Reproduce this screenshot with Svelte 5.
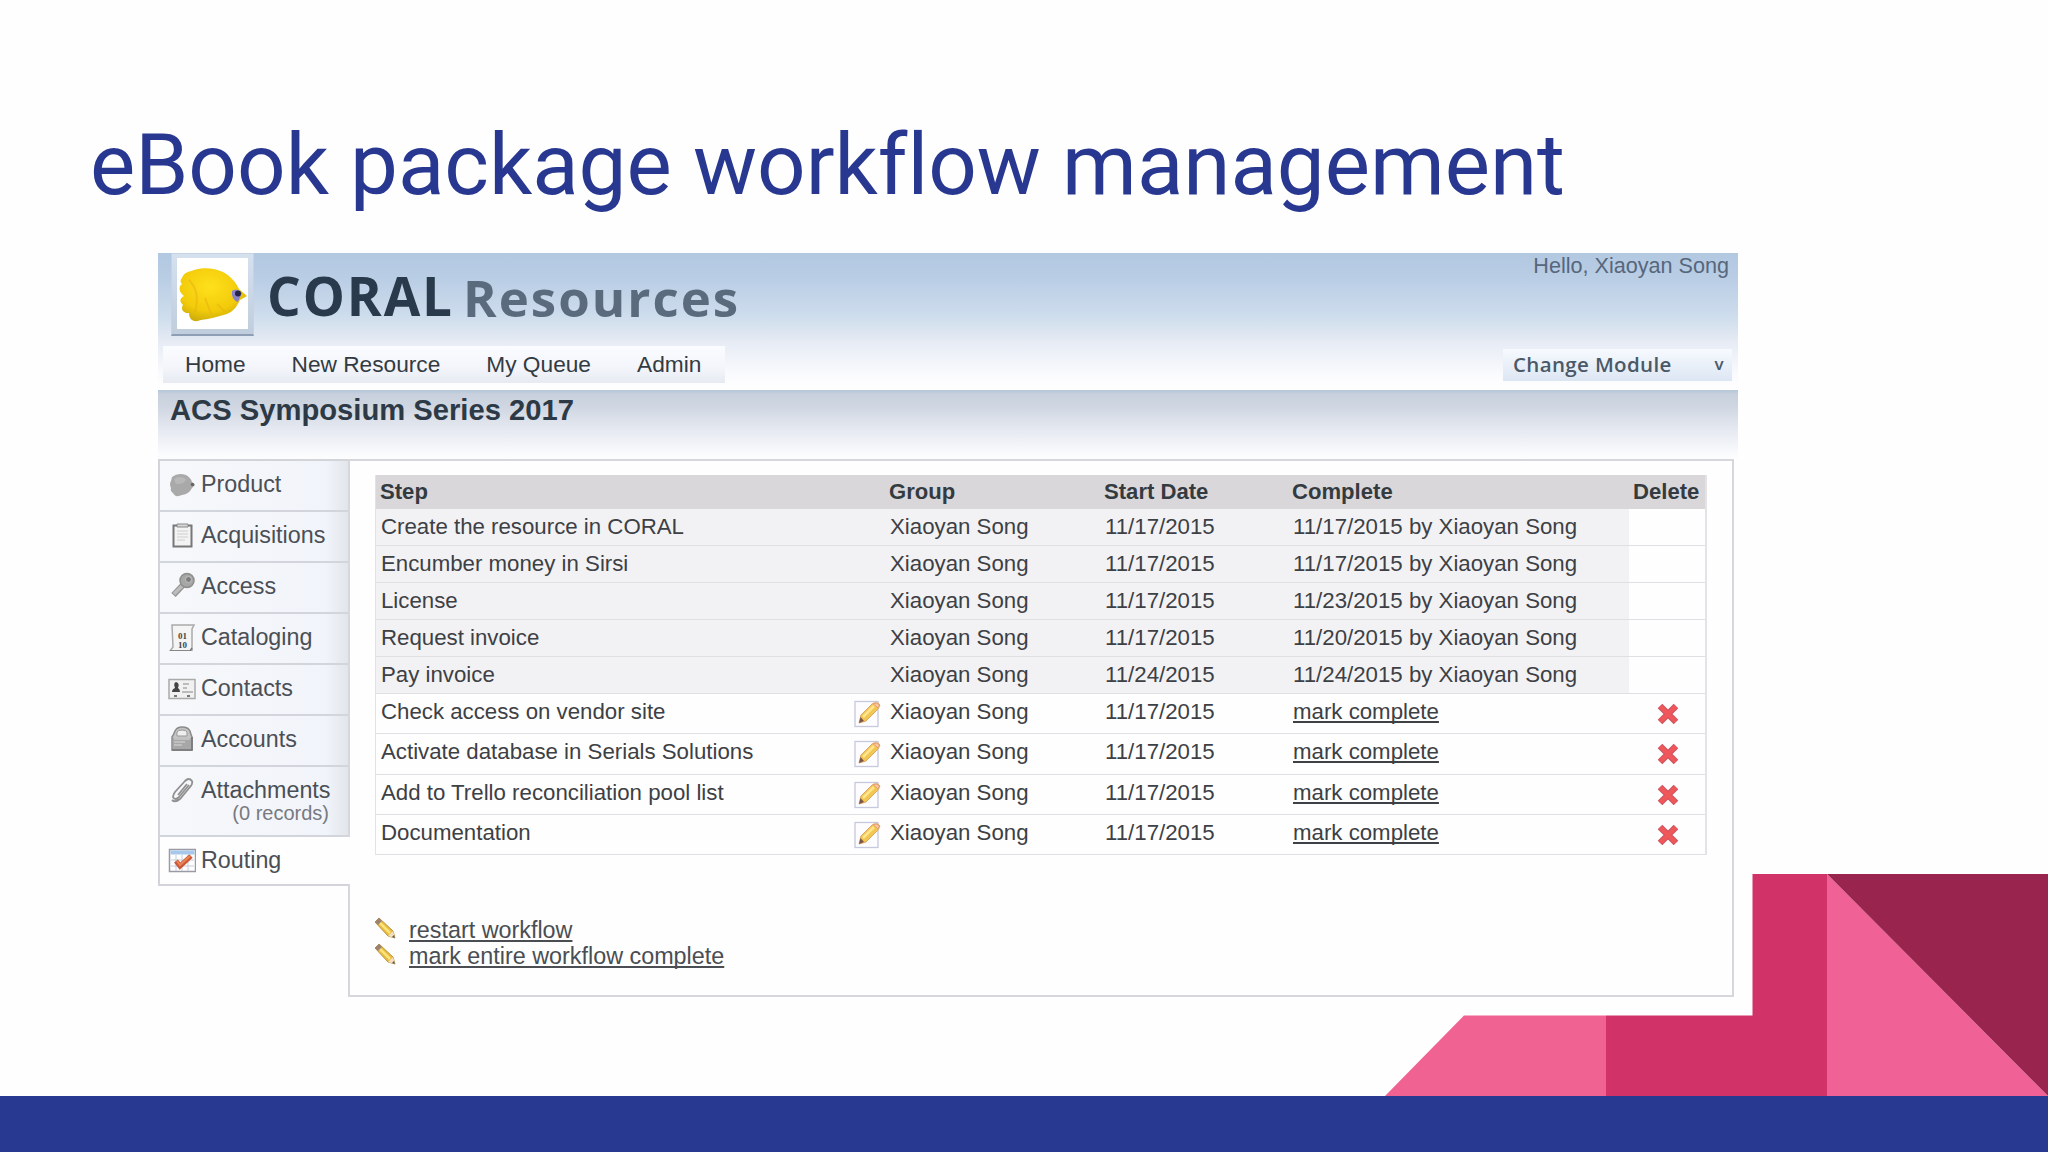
<script lang="ts">
	const menu = ['Home', 'New Resource', 'My Queue', 'Admin'];

	const tabs = [
		{ icon: 'fish', label: 'Product' },
		{ icon: 'clipboard', label: 'Acquisitions' },
		{ icon: 'key', label: 'Access' },
		{ icon: 'binary', label: 'Cataloging' },
		{ icon: 'card', label: 'Contacts' },
		{ icon: 'lock', label: 'Accounts' },
		{ icon: 'clip', label: 'Attachments', note: '(0 records)' },
		{ icon: 'calendar', label: 'Routing', active: true }
	];

	const group = 'Xiaoyan Song';

	const steps = [
		{ name: 'Create the resource in CORAL', start: '11/17/2015', done: '11/17/2015' },
		{ name: 'Encumber money in Sirsi', start: '11/17/2015', done: '11/17/2015' },
		{ name: 'License', start: '11/17/2015', done: '11/23/2015' },
		{ name: 'Request invoice', start: '11/17/2015', done: '11/20/2015' },
		{ name: 'Pay invoice', start: '11/24/2015', done: '11/24/2015' },
		{ name: 'Check access on vendor site', start: '11/17/2015' },
		{ name: 'Activate database in Serials Solutions', start: '11/17/2015' },
		{ name: 'Add to Trello reconciliation pool list', start: '11/17/2015' },
		{ name: 'Documentation', start: '11/17/2015' }
	];

	const actions = ['restart workflow', 'mark entire workflow complete'];
</script>

<div class="slide">
	<svg class="shapes" width="663" height="222" viewBox="0 0 663 222">
		<polygon points="0,222 79,141.500 221,141.500 221,222" fill="#f06292" />
		<polygon points="221,141.500 367.500,141.500 367.500,0 442,0 442,222 221,222" fill="#d13369" />
		<polygon points="442,0 663,222 442,222" fill="#f06295" />
		<polygon points="442,0 663,0 663,222" fill="#99244d" />
	</svg>

	<h1>eBook package workflow management</h1>

	<div class="app">
		<header>
			<div class="brand-row">
				<div class="logo">
					<svg width="71" height="71" viewBox="0 0 71 71">
						<defs>
							<radialGradient id="fish" cx="45%" cy="35%" r="70%">
								<stop offset="0" stop-color="#ffe01c" />
								<stop offset="0.65" stop-color="#f2cb0a" />
								<stop offset="1" stop-color="#c8a80c" />
							</radialGradient>
						</defs>
						<path
							d="M5 20C7 14 12 14 17 12C26 9 38 10 46 14C53 18 59 24 62 31L70 38L63 42C60 48 57 53 50 56C42 58 33 61 24 62C17 65 12 62 12 55C7 56 3 51 6 47C2 43 3 40 7 38C2 34 1 29 5 26C3 24 3 22 5 20Z"
							fill="url(#fish)"
						/>
						<path d="M12 22C20 30 22 40 18 54M28 40L34 56M40 46L48 54" stroke="#eab010" stroke-width="2" fill="none" opacity="0.5" />
						<path d="M55 33Q60 29 65 35L61 44Q54 42 55 33Z" fill="#8b83c8" />
						<circle cx="61" cy="35.500" r="3" fill="#25254a" />
					</svg>
				</div>
				<div class="brand"><span class="coral">CORAL</span><span class="module">Resources</span></div>
				<div class="hello">Hello, Xiaoyan Song</div>
			</div>
			<div class="menu-row">
				<nav>
					{#each menu as item}
						<span>{item}</span>
					{/each}
				</nav>
				<div class="change"><span>Change Module</span><b>v</b></div>
			</div>
		</header>

		<div class="title-bar">ACS Symposium Series 2017</div>

		<div class="body">
			<aside>
				{#each tabs as tab}
					<div class="tab" class:active={tab.active} class:tall={tab.note}>
						<svg width="28" height="28" viewBox="0 0 28 28" fill="none">
							{#if tab.icon === 'fish'}
								<path d="M4 7Q10 2 18 5Q23 8 24 12L27 15L24 18Q21 24 14 25Q7 28 5 23Q2 21 3 18Q1 14 3 11Z" fill="#a9a9a9" />
								<path d="M6 9Q12 5 18 9Q18 14 8 14Z" fill="#b8b8b8" />
								<circle cx="24.500" cy="14.500" r="1.800" fill="#666" />
							{:else if tab.icon === 'clipboard'}
								<rect x="5.500" y="4.500" width="18" height="21" fill="#f3f3f3" stroke="#777" stroke-width="2" />
								<path d="M9 6V3H20V6Z" fill="#d8d8d8" stroke="#888" />
								<path d="M9 10H20M9 13H20M9 16H20M9 19H17" stroke="#cfcfcf" />
							{:else if tab.icon === 'key'}
								<path d="M15 13L5.500 23" stroke="#949494" stroke-width="6" />
								<path d="M15 13L6 22" stroke="#bcbcbc" stroke-width="3.500" />
								<circle cx="19" cy="8.500" r="7" fill="#a6a6a6" stroke="#8d8d8d" stroke-width="1.500" />
								<circle cx="20.500" cy="7.500" r="3" fill="#7d7d7d" stroke="#c4c4c4" />
							{:else if tab.icon === 'binary'}
								<path d="M4 2H26L24 6V28H2L5 24Z" fill="#f4f4f4" stroke="#aaa" stroke-width="1.500" />
								<path d="M2 28H22L24 25" stroke="#777" stroke-width="1.500" />
								<text x="14.500" y="15.500">01</text>
								<text x="14.500" y="24.500">10</text>
							{:else if tab.icon === 'card'}
								<rect x="1" y="5.500" width="26" height="19" fill="#f1f1f1" stroke="#aaa" stroke-width="1.500" />
								<path d="M4 18Q4 15 7 14Q5 9 8 8Q12 9 10 14Q12 15 12 18Z" fill="#444" />
								<path d="M15 10H21M15 14H19M14 18H25" stroke="#aaa" stroke-width="1.500" />
								<path d="M6 22H9M19 22H22" stroke="#777" stroke-width="2" />
							{:else if tab.icon === 'lock'}
								<path d="M4 12Q6 9 7 6Q9 2 14 2Q20 2 22 6Q23 10 24 12V25H4Z" fill="#c4c4c4" stroke="#8b8b8b" stroke-width="1.500" />
								<path d="M9 11V7Q10 5 14 5Q18 5 19 7V11Z" fill="#eee" stroke="#999" />
								<rect x="5" y="13" width="18" height="12" fill="#a7a7a7" />
								<path d="M4 25H24V12" stroke="#747474" stroke-width="1.500" />
								<path d="M6 14H22M6 17H17M6 20H14" stroke="#c9c9c9" stroke-width="1.500" />
							{:else if tab.icon === 'clip'}
								<path
									d="M21 9L11 21Q7 25 5 21Q5 19 7 16L17 5Q21 1 24 5Q25 8 22 11L12 23Q7 27 4 24M19 8L10 19"
									stroke="#909090"
									stroke-width="1.800"
								/>
							{:else}
								<rect x="1.500" y="3.500" width="26" height="22" fill="#fff" stroke="#9a9aa4" stroke-width="1.500" />
								<rect x="2.500" y="4.500" width="24" height="4" fill="#a7c8ec" />
								<path d="M8 9V25M14 9V25M20 9V25M3 14H26M3 20H26" stroke="#c3cddc" />
								<path d="M8 15L12 20L23 10" stroke="#c9593b" stroke-width="5" />
								<path d="M9 15L12 19L22 10" stroke="#ee8454" stroke-width="2" />
							{/if}
						</svg>
						<div class="tab-text">
							{tab.label}
							{#if tab.note}
								<small>{tab.note}</small>
							{/if}
						</div>
					</div>
				{/each}
			</aside>

			<main>
				<div class="table">
					<div class="row head">
						<div>Step</div>
						<div>Group</div>
						<div>Start Date</div>
						<div>Complete</div>
						<div>Delete</div>
					</div>
					{#each steps as step}
						<div class="row" class:done={step.done}>
							<div>{step.name}</div>
							<div class="group">
								{#if !step.done}
									<svg class="edit" width="27" height="28" viewBox="0 0 27 28">
										<rect x="1" y="1.500" width="23" height="25" fill="#fdfdff" stroke="#c6c8dc" stroke-width="1.300" />
										<path d="M5 23L7 15L18 4Q23 1 26 5L24 9L12 21Z" fill="#f1c653" stroke="#dfa763" />
										<path d="M9 17L20 6" stroke="#ffe58b" stroke-width="2.500" />
										<path d="M19 3.500Q23 2 25.500 5L24 8Z" fill="#f9cba5" stroke="#e79c72" />
										<path d="M5 23L6.500 17L10 21Z" fill="#7d5546" />
									</svg>
								{/if}
								{group}
							</div>
							<div>{step.start}</div>
							<div>
								{#if step.done}
									{step.done} by {group}
								{:else}
									<span class="link">mark complete</span>
								{/if}
							</div>
							<div class="delete">
								{#if !step.done}
									<svg width="24" height="24" viewBox="0 0 24 24">
										<path d="M4 4L20 20M20 4L4 20" stroke="#cf5560" stroke-width="6.500" />
										<path d="M4.500 4.500L19.500 19.500M19.500 4.500L4.500 19.500" stroke="#f0575b" stroke-width="4" />
									</svg>
								{/if}
							</div>
						</div>
					{/each}
				</div>

				<div class="actions">
					{#each actions as action}
						<div class="action">
							<svg width="24" height="24" viewBox="0 0 24 24">
								<path d="M2 6L6 2L20 15L22 22L15 20Z" fill="#e9bd3c" stroke="#bd9540" />
								<path d="M6 6L17 17" stroke="#fae27d" stroke-width="2.500" />
								<path d="M2 6L6 2L9 5L5 9Z" fill="#9b8273" />
								<path d="M15 20L20 15L22 22Z" fill="#f3dfc0" />
								<path d="M19 21L22 22L21 19Z" fill="#555" />
							</svg>
							<span class="link">{action}</span>
						</div>
					{/each}
				</div>
			</main>
		</div>
	</div>

	<div class="footer"></div>
</div>

<style>
	:global(body) {
		background: #fefefe;
	}

	.slide {
		position: relative;
		display: flex;
		flex-direction: column;
		width: 2048px;
		height: 1152px;
		overflow: hidden;
		background: #fefefe;
		font-family: 'Liberation Sans', Arial, sans-serif;
		color: #3f4246;
	}

	.shapes {
		position: absolute;
		right: 0;
		bottom: 56px;
	}

	h1 {
		height: 253px;
		margin: 0;
		padding: 101px 0 0 90px;
		box-sizing: border-box;
		flex: none;
		font: 400 85.300px/128px Roboto, sans-serif;
		font-variant-ligatures: none;
		color: #283891;
		white-space: nowrap;
	}

	.app {
		width: 1580px;
		height: 762px;
		margin-left: 158px;
	}

	header {
		height: 137px;
		background: linear-gradient(#b2c8e1 0%, #bacee5 20%, #d0deed 48%, #e8ecf5 66%, #fafbfe 90%, #fff 100%);
	}

	.brand-row {
		display: flex;
		height: 93px;
	}

	.logo {
		height: 70px;
		margin-left: 13px;
		padding: 4px 5px 6px;
		border: solid #c6d3e3;
		border-width: 1px 1px 2px;
		border-bottom-color: #8e9fb5;
		background: linear-gradient(#d5e1ef, #c0cddd);
		flex: none;
	}

	.logo svg {
		display: block;
		background: #fff;
	}

	.brand {
		display: flex;
		margin-left: 13px;
		font: 700 53px/86px 'Open Sans', 'Noto Sans', sans-serif;
		white-space: nowrap;
	}

	.coral {
		width: 196px;
		color: #283a4b;
		letter-spacing: 1.900px;
	}

	.module {
		color: #5a6b7d;
		font-size: 51px;
		line-height: 88px;
		letter-spacing: 2px;
	}

	.hello {
		margin: 0 9px 0 auto;
		font-size: 21.600px;
		line-height: 25px;
		color: #56677c;
	}

	.menu-row {
		display: flex;
		justify-content: space-between;
		align-items: flex-start;
		padding: 0 6px 0 5px;
	}

	nav {
		display: flex;
		gap: 46px;
		width: 562px;
		height: 37px;
		padding-left: 22px;
		box-sizing: border-box;
		background: linear-gradient(#fbfcff, #f3f5fb 60%, #e7eaf1);
		font-size: 22.700px;
		line-height: 37px;
		color: #333b42;
		white-space: nowrap;
	}

	.change {
		display: flex;
		justify-content: space-between;
		width: 229px;
		height: 32px;
		margin-top: 3px;
		padding: 0 8px 0 10px;
		box-sizing: border-box;
		background: linear-gradient(#f7faff, #dce6f3);
		font: 600 20.500px/31px 'Open Sans', 'Noto Sans', sans-serif;
		letter-spacing: 0.350px;
		color: #4b5967;
		white-space: nowrap;
	}

	.change b {
		font-size: 17px;
		font-weight: 600;
		line-height: 29px;
	}

	.title-bar {
		height: 69px;
		padding-left: 12px;
		background: linear-gradient(#b3c7da 0, #c7d0dc 4px, #cfd6e1 16px, #e2e6ef 36px, #fafbfd 64px, #fdfdfd 69px);
		font-size: 29.200px;
		font-weight: bold;
		line-height: 40px;
		color: #2d3a46;
	}

	.body {
		display: flex;
		align-items: flex-start;
		height: 537px;
		width: 1576px;
	}

	aside {
		position: relative;
		z-index: 1;
		width: 190px;
		box-sizing: border-box;
		flex: none;
		border: 2px solid #d2d4da;
		border-right: none;
	}

	.tab {
		display: flex;
		gap: 5px;
		height: 51px;
		padding-left: 8px;
		box-sizing: border-box;
		border-bottom: 2px solid #d2d5dc;
		background: linear-gradient(90deg, #f7f8fb, #f1f4fa 88%, #e2e6eb);
		font-size: 23.300px;
		line-height: 46px;
		color: #4b4f55;
	}

	.tab svg {
		flex: none;
		margin-top: 9px;
	}

	.tab svg text {
		font: bold 9px 'Liberation Serif', serif;
		fill: #444;
		text-anchor: middle;
	}

	.tab.tall {
		height: 70px;
	}

	.tab.active {
		width: 192px;
		height: 47px;
		border-bottom: none;
		background: #fefefe;
	}

	.tab-text {
		flex: 1;
		white-space: nowrap;
	}

	small {
		display: block;
		margin: -10px 19px 0 0;
		font-size: 20px;
		line-height: 21px;
		text-align: right;
		color: #777a80;
	}

	main {
		flex: 1;
		height: 538px;
		padding: 14px 0 0 25px;
		box-sizing: border-box;
		border: 2px solid #d6d6dc;
	}

	.table {
		width: 1332px;
		box-sizing: border-box;
		border: solid #e3e3e7;
		border-width: 0 2px 0 1px;
	}

	.row {
		display: grid;
		grid-template-columns: 509px 215px 188px 341px 1fr;
		height: 40.250px;
		box-sizing: border-box;
		border-bottom: 1.500px solid #e0e0e4;
		font-size: 22.250px;
		line-height: 35px;
		color: #3d4044;
		white-space: nowrap;
	}

	.row > div {
		padding-left: 5px;
	}

	.row.head {
		height: 34px;
		border: none;
		background: #dad7db;
		font-size: 22.100px;
		font-weight: bold;
		line-height: 34px;
		color: #343b40;
	}

	.row.head > div {
		padding-left: 4px;
	}

	.row.done {
		height: 37px;
		line-height: 36px;
		background: #f2f2f4;
	}

	.group {
		position: relative;
	}

	.edit {
		position: absolute;
		left: -31px;
		top: 6px;
	}

	.row > .delete {
		display: flex;
		align-items: flex-start;
		padding: 8px 0 0 27px;
		background: #fefefe;
	}

	.link {
		text-decoration: underline;
		text-decoration-thickness: 2px;
		text-underline-offset: 2px;
		text-decoration-skip-ink: none;
	}

	.actions {
		margin: 62px 0 0 -2px;
	}

	.action {
		display: flex;
		align-items: flex-start;
		gap: 12px;
		height: 26px;
		font-size: 23.350px;
		line-height: 27px;
		color: #4a4e53;
	}

	.action svg {
		margin-top: -1px;
	}

	.footer {
		height: 56px;
		margin-top: auto;
		background: #283991;
	}
</style>
